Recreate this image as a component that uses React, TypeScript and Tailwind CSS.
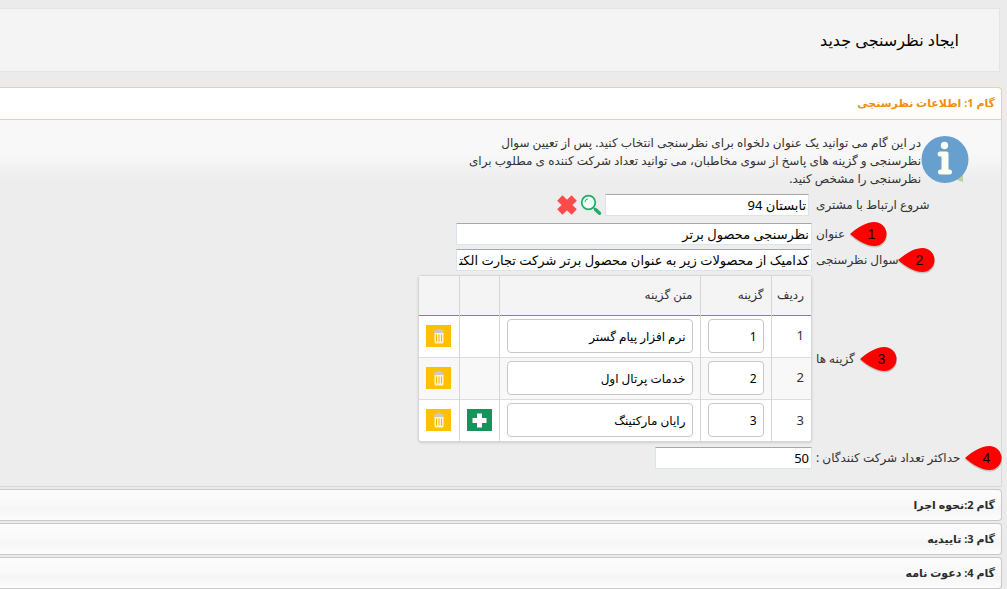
import type { ReactNode } from "react";

function Marker({ n }: { n: number }) {
  return (
    <svg
      className="pointer-events-none h-7 w-10 shrink-0"
      viewBox="0 0 40 28"
      aria-hidden="true"
    >
      <path d="M1 14.5C8 8 17 2.500 26 2.500A12 12 0 0 1 26 26.500C17 26.500 8 20.500 1 14.500Z" fill="#777" opacity=".35" />
      <path d="M1 13C8 7 17 1 25.500 1A12 12 0 0 1 25.500 25C17 25 8 19 1 13Z" fill="#fe0000" />
      <text x="22.500" y="18" textAnchor="middle" fontSize="14" fill="#1a0000" fontFamily="Liberation Sans, sans-serif">
        {n}
      </text>
    </svg>
  );
}

function Row({
  label,
  id,
  marker,
  markerClass = "",
  className = "",
  children,
}: {
  label: string;
  id: string;
  marker?: number;
  markerClass?: string;
  className?: string;
  children: ReactNode;
}) {
  return (
    <div className={`flex items-center ${className}`}>
      <div className="flex w-[185px] shrink-0 justify-end">
        <label htmlFor={id} className="relative whitespace-nowrap text-[12px] leading-[18px] text-[#333]">
          {label}
          {marker && (
            <span className={`absolute -top-1 left-full ${markerClass}`}>
              <Marker n={marker} />
            </span>
          )}
        </label>
      </div>
      {children}
    </div>
  );
}

const field =
  "h-[22px] border border-[#dde3ea] border-t-[#a5a7ad] bg-white px-0.5 text-[13px] text-black outline-none";
const cellField =
  "block h-[34px] w-full rounded border border-[#c8c8c8] bg-white px-1.5 text-[12px] text-black outline-none";

function TrashButton() {
  return (
    <button type="button" aria-label="حذف" className="mx-auto flex h-[22px] w-[25px] items-center justify-center bg-[#ffc000]">
      <svg className="h-4 w-3" viewBox="0 0 12 16" aria-hidden="true">
        <path d="M4.500 1.500Q6 0 7.500 1.500L10.500 2.500L11 5H1L1.500 2.500Z" fill="#c9c9c9" />
        <path d="M1.500 5H10.500V14Q10.500 15.500 9 15.500H3Q1.500 15.500 1.500 14Z" fill="#fff3cf" />
        <path d="M3.500 6.500V13.500M6 6.500V13.500M8.500 6.500V13.500" stroke="#f3b800" strokeWidth="1" />
      </svg>
    </button>
  );
}

function PlusButton() {
  return (
    <button type="button" aria-label="افزودن" className="mx-auto flex h-[22px] w-[25px] items-center justify-center bg-[#14935d]">
      <svg className="h-[15px] w-[15px]" viewBox="0 0 15 15" aria-hidden="true">
        <path d="M5 .5H10V5H14.500V10H10V14.500H5V10H.5V5H5Z" fill="#fff" />
      </svg>
    </button>
  );
}

const options = ["نرم افزار پیام گستر", "خدمات پرتال اول", "رایان مارکتینگ"];
const steps = ["گام 2:نحوه اجرا", "گام 3: تاییدیه", "گام 4: دعوت نامه"];

export default function App() {
  return (
    <div
      dir="rtl"
      className="min-h-screen overflow-hidden bg-[#ebebeb] pt-2 font-['Noto_Sans','DejaVu_Sans',sans-serif]"
    >
      <header className="ms-[7px] flex h-[64px] items-center border border-e-0 border-[#e4e4e4] bg-[#f4f4f4] ps-10">
        <h1 className="text-[16px] text-black">ایجاد نظرسنجی جدید</h1>
      </header>

      <main className="ms-[5px] mt-[15px]">
        <section>
          <h2 className="h-[33px] rounded-tr-[4px] border border-e-0 border-[#fbd55e] bg-white">
            <button type="button" className="flex h-full w-full items-center px-1.5 text-[11px] font-bold text-[#f08f0e]">
              گام 1: اطلاعات نظرسنجی
            </button>
          </h2>
          <div className="border-b border-s border-[#d8d8d8] bg-[linear-gradient(#f8f8f8_0px,#f8f8f8_34px,#ededed_60px,#ededed_100%)] pb-[17px] pt-3.5">
            <div className="flex ps-8">
              <svg className="mt-0.5 h-12 w-12 shrink-0" viewBox="0 0 48 48" aria-hidden="true">
                <path d="M33 43L42 37V46Z" fill="#bfd0a0" />
                <circle cx="24" cy="23.500" r="23.500" fill="#679fcf" />
                <circle cx="23.500" cy="9.500" r="3.700" fill="#fffdf0" />
                <path d="M18.500 15.500H25.500Q27.500 15.500 27.500 17.500V33.500H28.500Q31 33.500 31 36T28.500 38.500H19.500Q17 38.500 17 36T19.500 33.500H20.500V20.500H18.500Q16.500 20 16.500 18T18.500 15.500Z" fill="#fffdf0" />
              </svg>
              <p className="whitespace-nowrap text-[12px] leading-[18px] text-[#333]">
                در این گام می توانید یک عنوان دلخواه برای نظرسنجی انتخاب کنید. پس از تعیین سوال
                <br />
                نظرسنجی و گزینه های پاسخ از سوی مخاطبان، می توانید تعداد شرکت کننده ی مطلوب برای
                <br />
                نظرسنجی را مشخص کنید.
              </p>
            </div>

            <form className="mt-1.5" onSubmit={(e) => e.preventDefault()}>
              <Row label="شروع ارتباط با مشتری" id="contact">
                <input id="contact" className={`${field} ms-[7px] w-[204px]`} defaultValue="تابستان 94" />
                <button type="button" aria-label="جستجو" className="ms-[3px]">
                  <svg className="h-[22px] w-[22px]" viewBox="0 0 22 22" aria-hidden="true">
                    <circle cx="8.500" cy="8.500" r="6.800" fill="#f4fff8" stroke="#1fae66" strokeWidth="1.800" />
                    <path d="M4.800 8A4 4 0 0 1 8 4.800" fill="none" stroke="#1fae66" strokeWidth="1" />
                    <path d="M13.500 13.500L15.500 15.500" stroke="#1fae66" strokeWidth="1.500" />
                    <path d="M15.500 15.500L19.500 19.300" stroke="#1fae66" strokeWidth="3.400" strokeLinecap="round" />
                  </svg>
                </button>
                <button type="button" aria-label="پاک کردن" className="ms-0.5">
                  <svg className="h-[22px] w-[22px]" viewBox="0 0 22 22" aria-hidden="true">
                    <path d="M3.800 4L18.200 18M18.200 4L3.800 18" stroke="#ff4a4a" strokeWidth="7.500" />
                  </svg>
                </button>
              </Row>
              <Row label="عنوان" id="title" marker={1} markerClass="ml-1" className="mt-[7px]">
                <input id="title" className={`${field} ms-1 w-[356px]`} defaultValue="نظرسنجی محصول برتر" />
              </Row>
              <Row label="سوال نظرسنجی" id="question" marker={2} markerClass="-ml-0.5" className="mt-1">
                <input
                  id="question"
                  className={`${field} ms-1 w-[356px]`}
                  defaultValue="کدامیک از محصولات زیر به عنوان محصول برتر شرکت تجارت الکترونیک است؟"
                />
              </Row>
              <Row label="گزینه ها" id="option-1" marker={3} markerClass="ml-1" className="mt-1">
                <div className="ms-1 w-[394px] rounded-[3px] border border-[#d6d6d6] bg-white shadow-sm">
                  <table className="w-full table-fixed border-collapse text-[12px] text-[#333]">
                    <colgroup>
                      <col className="w-[40px]" />
                      <col className="w-[71px]" />
                      <col />
                      <col className="w-[40px]" />
                      <col className="w-[40px]" />
                    </colgroup>
                    <thead>
                      <tr className="h-[39px] border-b border-[#e8642c] bg-[#f4f4f4] text-right">
                        <th className="border-e border-[#d6d6d6] px-[7px] font-normal">ردیف</th>
                        <th className="border-e border-[#d6d6d6] px-[7px] font-normal">گزینه</th>
                        <th className="border-e border-[#d6d6d6] px-[7px] font-normal">متن گزینه</th>
                        <th className="border-e border-[#d6d6d6]" />
                        <th />
                      </tr>
                    </thead>
                    <tbody>
                      {options.map((text, i) => (
                        <tr key={text} className="h-[42px] border-b border-[#dcdcdc] last:border-b-0 even:bg-[#f8f8f8]">
                          <td className="border-e border-[#d6d6d6] px-[7px] text-[13px]">{i + 1}</td>
                          <td className="border-e border-[#d6d6d6] px-[7px]">
                            <input aria-label={`گزینه ${i + 1}`} className={cellField} defaultValue={i + 1} />
                          </td>
                          <td className="border-e border-[#d6d6d6] px-[7px]">
                            <input
                              id={`option-${i + 1}`}
                              aria-label={`متن گزینه ${i + 1}`}
                              className={cellField}
                              defaultValue={text}
                            />
                          </td>
                          <td className="border-e border-[#d6d6d6]">{i === 2 && <PlusButton />}</td>
                          <td>
                            <TrashButton />
                          </td>
                        </tr>
                      ))}
                    </tbody>
                  </table>
                </div>
              </Row>
              <Row label="حداکثر تعداد شرکت کنندگان :" id="max" marker={4} markerClass="ml-1" className="mt-[5px]">
                <input id="max" className={`${field} ms-1 w-[157px]`} defaultValue="50" />
              </Row>
            </form>
          </div>
        </section>

        {steps.map((s) => (
          <h2 key={s} className="mt-0.5 h-8 rounded-r-[4px] border border-e-0 border-[#c9c9c9] bg-[linear-gradient(#fcfcfc,#f9f9f9_50%,#f5f5f5_60%,#fcfcfc)]">
            <button type="button" className="flex h-full w-full items-center px-1.5 text-[11px] font-bold text-[#2c2c2c]">
              {s}
            </button>
          </h2>
        ))}
      </main>
    </div>
  );
}
